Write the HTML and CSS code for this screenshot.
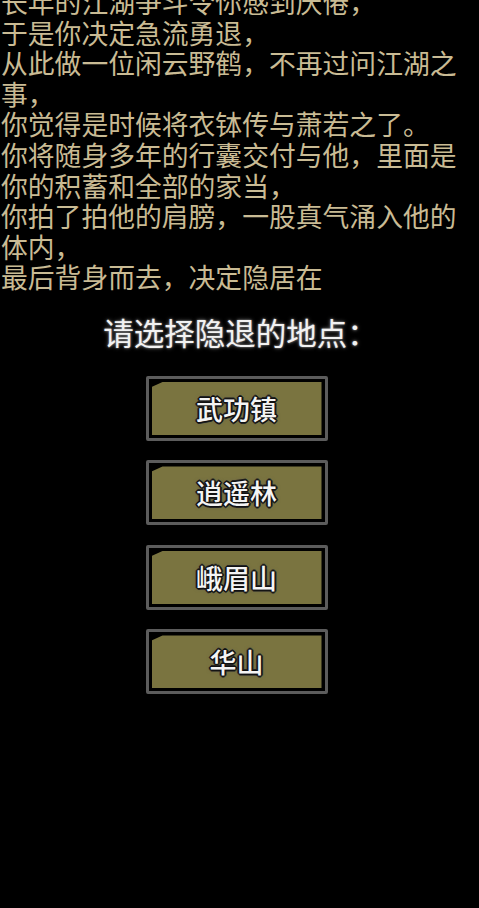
FILE: index.html
```html
<!DOCTYPE html>
<html lang="zh-CN">
<head>
	<meta charset="utf-8">
	<title>隐退</title>
	<meta name="viewport" content="width=device-width, initial-scale=1">
	<link rel="stylesheet" href="styles.css">
</head>
<body>
	<div id="story">
		<p class="story-text">长年的江湖争斗令你感到厌倦，<br>于是你决定急流勇退，<br>从此做一位闲云野鹤，不再过问江湖之事，<br>你觉得是时候将衣钵传与萧若之了。<br>你将随身多年的行囊交付与他，里面是你的积蓄和全部的家当，<br>你拍了拍他的肩膀，一股真气涌入他的体内，<br>最后背身而去，决定隐居在</p>
	</div>

	<h4 class="choice-title">请选择隐退的地点：</h4>

	<div class="choices">
		<button class="place" id="wugong"><span>武功镇</span></button>
		<button class="place" id="xiaoyao"><span>逍遥林</span></button>
		<button class="place" id="emei"><span>峨眉山</span></button>
		<button class="place" id="huashan"><span>华山</span></button>
	</div>
</body>
</html>
```

FILE: styles.css
```css
html, body {
  margin: 0;
  padding: 0;
  background: #000;
}

body {
  width: 479px;
  height: 908px;
  overflow: hidden;
  font-family: "Noto Sans CJK SC", "Noto Sans", sans-serif;
}

#story { margin-top: -13px; }

.story-text {
  margin: 0;
  padding: 0 0 0 1px;
  font-size: 26.8px;
  line-height: 30.6px;
  color: #c9bb94;
}

.choice-title {
  margin: 19px 0 0;
  padding-left: 2px;
  text-align: center;
  font-size: 30.5px;
  line-height: 40px;
  font-weight: 400;
  color: #f2f2f2;
  text-shadow: 0 0 2px #999, 0 0 4px #666;
}

.choices {
  display: flex;
  flex-direction: column;
  align-items: center;
  gap: 19.5px;
  margin-top: 24px;
  padding-right: 6px;
}

button.place {
  width: 182px;
  height: 65px;
  padding: 3px;
  box-sizing: border-box;
  background: #000;
  border: 3px solid #5c5c5c;
  border-radius: 2px;
  cursor: pointer;
  font-family: inherit;
}

button.place span {
  display: flex;
  align-items: center;
  justify-content: center;
  width: 100%;
  height: 100%;
  background: #7a7440;
  clip-path: polygon(0 5px, 11px 0, 100% 0, 100% 100%, 0 100%);
  font-size: 27px;
  font-weight: 500;
  color: #f4f4f4;
  text-shadow:
    1px 1px 0 #111, -1px -1px 0 #111, 1px -1px 0 #111, -1px 1px 0 #111,
    2px 0 0 #222, -2px 0 0 #222, 0 2px 0 #222, 0 -2px 0 #222,
    0 0 4px #555;
}
```
